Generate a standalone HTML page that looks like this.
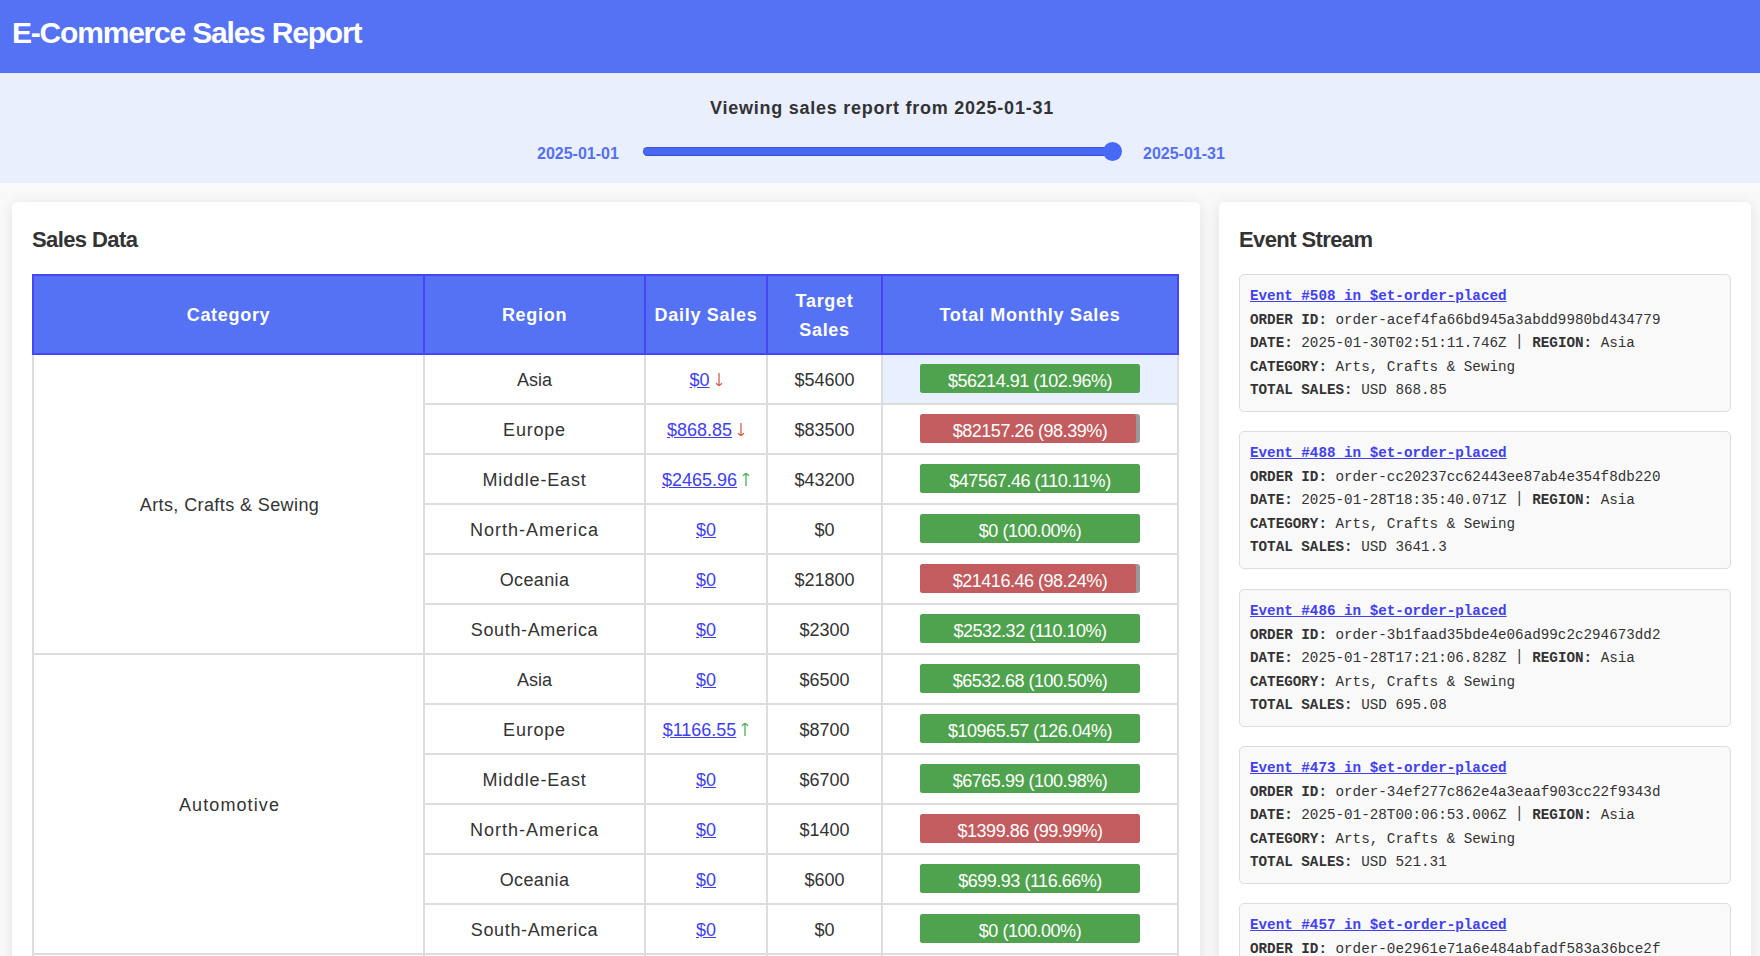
<!DOCTYPE html>
<html><head><meta charset="utf-8">
<style>
*{box-sizing:border-box;}
html,body{margin:0;padding:0;}
body{width:1760px;height:956px;overflow:hidden;background:#f9f9f9;font-family:"Liberation Sans",sans-serif;color:#333;position:relative;}
.hdr{position:absolute;left:0;top:0;width:1760px;height:73px;background:#5472f3;}
.hdr h1{position:absolute;left:12px;top:15px;margin:0;font-size:30px;line-height:36px;color:#fff;font-weight:bold;white-space:nowrap;letter-spacing:-1.2px;}
.ban{position:absolute;left:0;top:73px;width:1760px;height:110px;background:#e9effd;}
.ban .t{position:absolute;left:0;width:1760px;top:23px;text-align:center;font-size:18px;line-height:24px;font-weight:bold;color:#333;letter-spacing:0.75px;padding-left:4px;}
.ban .l{position:absolute;top:71.5px;font-size:16px;line-height:18px;font-weight:bold;color:#5470f2;white-space:nowrap;}
.track{position:absolute;left:643px;top:74px;width:478px;height:9px;border-radius:4.5px;background:#4868f6;box-shadow:inset 0 1px 1px rgba(40,50,120,0.35),inset 0 -1px 1px rgba(40,50,120,0.35);}
.thumb{position:absolute;left:1103px;top:69px;width:19px;height:19px;border-radius:50%;background:#4868f6;}
.card{position:absolute;top:202px;background:#fff;border-radius:5px;box-shadow:0 2px 14px rgba(0,0,0,0.1);}
.c1{left:12px;width:1188px;height:800px;}
.c2{left:1219px;width:532px;height:800px;}
.card h2{position:absolute;margin:0;font-size:22px;line-height:28px;font-weight:bold;color:#333;white-space:nowrap;letter-spacing:-0.6px;}
table{position:absolute;left:20px;top:72px;border-collapse:collapse;width:1147px;font-size:18px;}
td.hl{background:#e8effe;}
th{background:#5472f3;color:#fff;border:2px solid #4646f5;font-weight:bold;height:79px;line-height:29px;text-align:center;padding:2px 4px 0 4px;letter-spacing:0.7px;}
td{border:2px solid #ddd;text-align:center;height:50px;padding:2px 0 0 0;color:#333;}
td a{color:#4040f0;text-decoration:underline;}
td svg{vertical-align:baseline;margin-left:5px;}
.up{color:#4caf50;}
.dn{color:#d05050;}
.bar{display:inline-block;position:relative;top:-2px;width:220px;height:29px;background:#999;border-radius:3px;vertical-align:middle;}
.bar .f{position:absolute;left:0;top:0;height:29px;border-radius:3px;}
.bar .g{background:#50a34e;}
.bar .r{background:#c25c5e;}
.bar span{position:absolute;left:0;top:3.5px;width:220px;line-height:29px;text-align:center;color:#fff;font-size:18px;letter-spacing:-0.48px;}
.ev{position:absolute;left:20px;width:492px;height:138px;background:#f9f9f9;border:1px solid #ddd;border-radius:5px;padding:10px 10px 0 10px;font-family:"Liberation Mono",monospace;font-size:14.25px;line-height:23.5px;color:#333;white-space:nowrap;}
.ev a{color:#4040f0;font-weight:bold;text-decoration:underline;display:block;}
.ev b{font-weight:bold;}
.pp{display:inline-block;transform:translateY(-1.5px) scaleY(1.2);}
</style></head><body>
<div class="hdr"><h1>E-Commerce Sales Report</h1></div>
<div class="ban">
<div class="t">Viewing sales report from 2025-01-31</div>
<div class="l" style="left:537px">2025-01-01</div>
<div class="track"></div><div class="thumb"></div>
<div class="l" style="left:1143px">2025-01-31</div>
</div>
<div class="card c1">
<h2 style="left:20px;top:24px">Sales Data</h2>
<table>
<tr><th style="width:391px">Category</th><th style="width:221px">Region</th><th style="width:122px">Daily Sales</th><th style="width:115px">Target<br>Sales</th><th>Total Monthly Sales</th></tr>
<tr><td rowspan="6" style="letter-spacing:0.4px;padding-left:2px">Arts, Crafts &amp; Sewing</td><td style="letter-spacing:0px">Asia</td><td><a>$0</a><svg width="8" height="13" viewBox="0 0 8 13"><path d="M4 0V12.6M1 10.2L4 12.8L7 10.2" fill="none" stroke="#d0604a" stroke-width="1.3"/></svg></td><td>$54600</td><td class="hl"><div class="bar"><div class="f g" style="width:100%"></div><span>$56214.91 (102.96%)</span></div></td></tr>
<tr><td style="letter-spacing:0.8px">Europe</td><td><a>$868.85</a><svg width="8" height="13" viewBox="0 0 8 13"><path d="M4 0V12.6M1 10.2L4 12.8L7 10.2" fill="none" stroke="#d0604a" stroke-width="1.3"/></svg></td><td>$83500</td><td><div class="bar"><div class="f r" style="width:98.39%"></div><span>$82157.26 (98.39%)</span></div></td></tr>
<tr><td style="letter-spacing:0.83px">Middle-East</td><td><a>$2465.96</a><svg width="8" height="13" viewBox="0 0 8 13"><path d="M4 13V0.4M1 2.8L4 0.2L7 2.8" fill="none" stroke="#4caf50" stroke-width="1.3"/></svg></td><td>$43200</td><td><div class="bar"><div class="f g" style="width:100%"></div><span>$47567.46 (110.11%)</span></div></td></tr>
<tr><td style="letter-spacing:0.98px">North-America</td><td><a>$0</a></td><td>$0</td><td><div class="bar"><div class="f g" style="width:100%"></div><span>$0 (100.00%)</span></div></td></tr>
<tr><td style="letter-spacing:0.37px">Oceania</td><td><a>$0</a></td><td>$21800</td><td><div class="bar"><div class="f r" style="width:98.24%"></div><span>$21416.46 (98.24%)</span></div></td></tr>
<tr><td style="letter-spacing:0.65px">South-America</td><td><a>$0</a></td><td>$2300</td><td><div class="bar"><div class="f g" style="width:100%"></div><span>$2532.32 (110.10%)</span></div></td></tr>
<tr><td rowspan="6" style="letter-spacing:1.1px;padding-left:2px">Automotive</td><td style="letter-spacing:0px">Asia</td><td><a>$0</a></td><td>$6500</td><td><div class="bar"><div class="f g" style="width:100%"></div><span>$6532.68 (100.50%)</span></div></td></tr>
<tr><td style="letter-spacing:0.8px">Europe</td><td><a>$1166.55</a><svg width="8" height="13" viewBox="0 0 8 13"><path d="M4 13V0.4M1 2.8L4 0.2L7 2.8" fill="none" stroke="#4caf50" stroke-width="1.3"/></svg></td><td>$8700</td><td><div class="bar"><div class="f g" style="width:100%"></div><span>$10965.57 (126.04%)</span></div></td></tr>
<tr><td style="letter-spacing:0.83px">Middle-East</td><td><a>$0</a></td><td>$6700</td><td><div class="bar"><div class="f g" style="width:100%"></div><span>$6765.99 (100.98%)</span></div></td></tr>
<tr><td style="letter-spacing:0.98px">North-America</td><td><a>$0</a></td><td>$1400</td><td><div class="bar"><div class="f r" style="width:99.99%"></div><span>$1399.86 (99.99%)</span></div></td></tr>
<tr><td style="letter-spacing:0.37px">Oceania</td><td><a>$0</a></td><td>$600</td><td><div class="bar"><div class="f g" style="width:100%"></div><span>$699.93 (116.66%)</span></div></td></tr>
<tr><td style="letter-spacing:0.65px">South-America</td><td><a>$0</a></td><td>$0</td><td><div class="bar"><div class="f g" style="width:100%"></div><span>$0 (100.00%)</span></div></td></tr>
<tr><td rowspan="1" style="letter-spacing:0px;padding-left:2px">Baby</td><td style="letter-spacing:0px">Asia</td><td><a>$0</a></td><td>$5000</td><td><div class="bar"><div class="f g" style="width:100%"></div><span>$5100.00 (102.00%)</span></div></td></tr>
</table>
</div>
<div class="card c2">
<h2 style="left:20px;top:24px">Event Stream</h2>
<div class="ev" style="top:72.0px"><a>Event #508 in $et-order-placed</a><b>ORDER ID:</b> order-acef4fa66bd945a3abdd9980bd434779<br><b>DATE:</b> 2025-01-30T02:51:11.746Z <span class="pp">|</span> <b>REGION:</b> Asia<br><b>CATEGORY:</b> Arts, Crafts &amp; Sewing<br><b>TOTAL SALES:</b> USD 868.85</div>
<div class="ev" style="top:229.0px"><a>Event #488 in $et-order-placed</a><b>ORDER ID:</b> order-cc20237cc62443ee87ab4e354f8db220<br><b>DATE:</b> 2025-01-28T18:35:40.071Z <span class="pp">|</span> <b>REGION:</b> Asia<br><b>CATEGORY:</b> Arts, Crafts &amp; Sewing<br><b>TOTAL SALES:</b> USD 3641.3</div>
<div class="ev" style="top:387.0px"><a>Event #486 in $et-order-placed</a><b>ORDER ID:</b> order-3b1faad35bde4e06ad99c2c294673dd2<br><b>DATE:</b> 2025-01-28T17:21:06.828Z <span class="pp">|</span> <b>REGION:</b> Asia<br><b>CATEGORY:</b> Arts, Crafts &amp; Sewing<br><b>TOTAL SALES:</b> USD 695.08</div>
<div class="ev" style="top:544.0px"><a>Event #473 in $et-order-placed</a><b>ORDER ID:</b> order-34ef277c862e4a3eaaf903cc22f9343d<br><b>DATE:</b> 2025-01-28T00:06:53.006Z <span class="pp">|</span> <b>REGION:</b> Asia<br><b>CATEGORY:</b> Arts, Crafts &amp; Sewing<br><b>TOTAL SALES:</b> USD 521.31</div>
<div class="ev" style="top:701.0px"><a>Event #457 in $et-order-placed</a><b>ORDER ID:</b> order-0e2961e71a6e484abfadf583a36bce2f<br><b>DATE:</b> 2025-01-27T12:00:00.000Z <span class="pp">|</span> <b>REGION:</b> Asia<br><b>CATEGORY:</b> Arts, Crafts &amp; Sewing<br><b>TOTAL SALES:</b> USD 100.00</div>
</div>
</body></html>
